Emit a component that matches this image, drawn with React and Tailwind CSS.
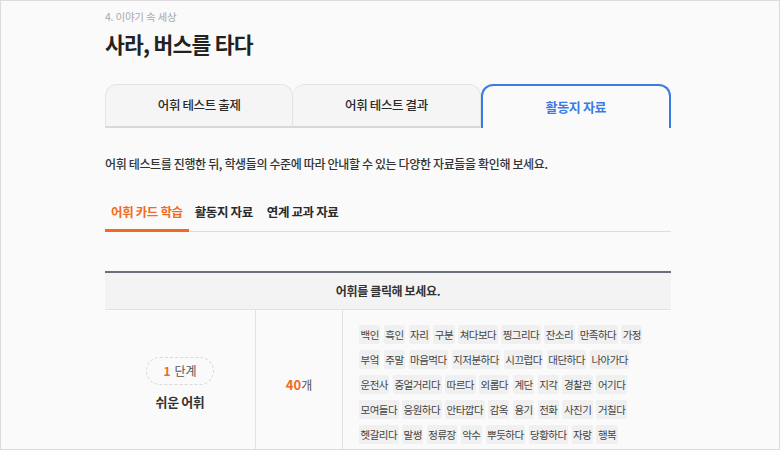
import React from "react";

const words = [
  ["백인", "흑인", "자리", "구분", "쳐다보다", "찡그리다", "잔소리", "만족하다", "가정"],
  ["부엌", "주말", "마음먹다", "지저분하다", "시끄럽다", "대단하다", "나아가다"],
  ["운전사", "중얼거리다", "따르다", "외롭다", "계단", "지각", "경찰관", "어기다"],
  ["모여들다", "응원하다", "안타깝다", "감옥", "용기", "전화", "사진기", "거칠다"],
  ["헷갈리다", "말썽", "정류장", "악수", "뿌듯하다", "당황하다", "자랑", "행복"],
];

export default function App() {
  return (
    <div
      className="w-[780px] h-[450px] overflow-hidden border border-[#dcdcdc] bg-[#fafafa] text-[#333]"
      style={{ fontFamily: '"Noto Sans CJK KR", "Noto Sans", sans-serif' }}
    >
      <div className="ml-[104px] w-[566px] pt-[9px]">
        {/* Header */}
        <p className="text-[10.5px] leading-[14px] text-[#a8a8a8] tracking-[-0.02em]">4. 이야기 속 세상</p>
        <h1 className="mt-[7px] text-[21.5px] leading-[26px] font-bold text-[#222] tracking-[-0.035em]">
          사라, 버스를 타다
        </h1>

        {/* Main tabs */}
        <div className="mt-[27px] flex h-[44px]">
          <div className="flex-1 flex items-center justify-center rounded-t-[12px] border border-b-2 border-[#e3e3e3] border-b-[#d8d8d8] bg-[#f5f5f5] text-[12.5px] font-medium text-[#2a2a2a] tracking-[-0.03em]">
            어휘 테스트 출제
          </div>
          <div className="flex-1 flex items-center justify-center rounded-t-[12px] border border-l-0 border-b-2 border-[#e3e3e3] border-b-[#d8d8d8] bg-[#f5f5f5] text-[12.5px] font-medium text-[#2a2a2a] tracking-[-0.03em]">
            어휘 테스트 결과
          </div>
          <div className="flex-1 flex items-center justify-center rounded-t-[12px] border-2 border-b-0 border-[#3a7be6] bg-[#fafafa] text-[13px] font-bold text-[#3a7be6] tracking-[-0.03em]">
            활동지 자료
          </div>
        </div>

        <p className="mt-[27px] text-[12px] leading-[18px] font-medium tracking-[-0.03em]">
          어휘 테스트를 진행한 뒤, 학생들의 수준에 따라 안내할 수 있는 다양한 자료들을 확인해 보세요.
        </p>

        {/* Sub tabs */}
        <div className="mt-[30px] flex border-b border-[#dedede]">
          <div className="px-[6px] pb-[8px] -mb-px border-b-[3px] border-[#f26a21] text-[12.5px] leading-[18px] font-semibold text-[#f26a21] tracking-[-0.03em]">
            어휘 카드 학습
          </div>
          <div className="px-[6px] pb-[8px] text-[12.5px] leading-[18px] font-semibold text-[#2a2a2a] tracking-[-0.03em]">
            활동지 자료
          </div>
          <div className="px-[6px] pl-[8px] pb-[8px] text-[12.5px] leading-[18px] font-semibold text-[#2a2a2a] tracking-[-0.03em]">
            연계 교과 자료
          </div>
        </div>

        {/* Table */}
        <div className="mt-[39px] border-t-2 border-[#6b6f78]">
          <div className="h-[37px] flex items-center justify-center bg-[#f3f3f3] border-b border-[#e2e2e2] text-[12px] font-semibold tracking-[-0.03em]">
            어휘를 클릭해 보세요.
          </div>
          <div className="flex border-b border-[#e2e2e2]">
            <div className="w-[150px] flex flex-col items-center justify-center">
              <div className="w-[68px] h-[28px] flex items-center justify-center rounded-full border border-dashed border-[#d9d9d9] text-[12px] text-[#555]">
                <span className="font-bold text-[#f26a21] mr-[4px]">1</span>단계
              </div>
              <div className="mt-[7px] text-[13px] font-semibold text-[#333] tracking-[-0.03em]">쉬운 어휘</div>
            </div>
            <div className="w-[87px] flex items-center justify-center border-l border-[#e2e2e2] text-[12px] text-[#555]">
              <span className="text-[13px] font-bold text-[#f26a21]">40</span>개
            </div>
            <div className="flex-1 border-l border-[#e2e2e2] pl-[16px] pr-[4px] pt-[15px] pb-[15px] flex flex-col gap-[6px]">
              {words.map((row, i) => (
                <div key={i} className="flex gap-[3.5px]">
                  {row.map((w) => (
                    <span
                      key={w}
                      className="shrink-0 whitespace-nowrap h-[19px] px-[1.5px] flex items-center bg-[#f0f0f0] rounded-[2px] text-[10.5px] text-[#444] tracking-[-0.05em]"
                    >
                      {w}
                    </span>
                  ))}
                </div>
              ))}
            </div>
          </div>
        </div>
      </div>
    </div>
  );
}
